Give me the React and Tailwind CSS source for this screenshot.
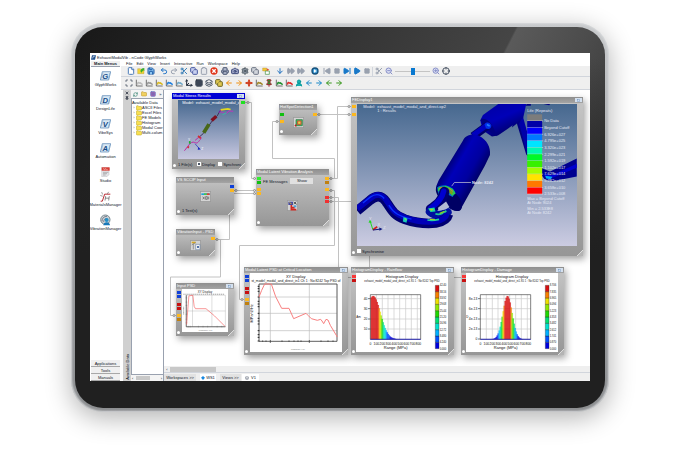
import React from 'react';
import {
  File, Save, Undo2, Redo2, Scissors, Copy, Clipboard, Camera, Settings, ArrowDown, SkipBack,
  Square, FastForward, Play, ZoomIn, ZoomOut, Crosshair, Scan, Grid3x3, Layers, ArrowRight,
  ArrowLeft, Sparkle, Folder, Printer, RefreshCw, Move3d, SkipForward, UserRound, X, Pin,
} from 'lucide-react';

const PALETTE = ['#0000e0', '#0050ff', '#00b0ff', '#00e0d0', '#00e070', '#20d800', '#90e800', '#f0e000', '#f88000', '#d81010'];

const MENUS = ['File', 'Edit', 'View', 'Insert', 'Interactive', 'Run', 'Workspace', 'Help'];

const PRODUCTS = [
  { letter: 'G', name: 'GlyphWorks' },
  { letter: 'D', name: 'DesignLife' },
  { letter: 'V', name: 'VibeSys' },
  { letter: 'A', name: 'Automation' },
  { kind: 'studio', name: 'Studio' },
  { kind: 'materials', name: 'MaterialsManager' },
  { kind: 'vibration', name: 'VibrationManager' },
];

const TREE = ['ASCII Files', 'Excel Files', 'FE Models', 'Histogram', 'Modal Coor', 'Multi-colum'];

function OpenIcon({ className }) {
  return (
    <svg viewBox="0 0 24 24" className={className}>
      <path d="M2 5h8l2 3h9v12H2z" fill="#f0d438" stroke="#a89020" />
      <path d="M10 12c2-7 6-9 12-9v9l-3-2-6 7z" fill="#3cae2c" />
    </svg>
  );
}

function StopIcon({ className }) {
  return (
    <svg viewBox="0 0 24 24" className={className}>
      <circle cx="12" cy="12" r="11" fill="#e03418" />
      <path d="M7 7l10 10M17 7L7 17" stroke="#fff" strokeWidth="4" />
    </svg>
  );
}

function RunIcon({ className }) {
  return (
    <svg viewBox="0 0 24 24" className={className}>
      <circle cx="12" cy="12" r="11" fill="#14507c" />
      <circle cx="12" cy="12" r="7" fill="#48a4dc" />
      <path d="M9 7l8 5-8 5z" fill="#fff" />
    </svg>
  );
}

function SwapIcon({ className }) {
  return (
    <svg viewBox="0 0 24 24" className={className}>
      <path d="M2 3h12v9H2z" fill="#f0c838" stroke="#b08020" />
      <path d="M10 12h12v10H10z" fill="#fff" stroke="#409040" strokeWidth="2" />
      <path d="M14 4l8 4-7 4z" fill="#e05030" />
    </svg>
  );
}

// chart axes with a coloured trace, used by most of the plotting tools
function AxesIcon({ className, color }) {
  return (
    <svg viewBox="0 0 24 24" className={className} fill="none">
      <path d="M4 2v19h19" stroke="#333" strokeWidth="2" />
      <path d="M7 17c3-12 6-3 8-5s3 5 8 3" stroke={color} strokeWidth="5" />
    </svg>
  );
}

const BAR_ONE = [
  { gap: '', items: [[File, 'New', 'text-[#4c7cb8] fill-white'], [OpenIcon, 'Open', ''], [Save, 'Save', 'text-[#1c5ca8] fill-[#8cc4f0]']] },
  { gap: 'ml-[3px]', items: [[Undo2, 'Undo', 'text-[#2878c8]'], [Redo2, 'Redo', 'text-gray-400'], [Scissors, 'Cut', 'text-[#3c80b8]'], [Copy, 'Copy', 'text-[#4858a0] fill-[#c8d0f0]'], [Clipboard, 'Paste', 'text-gray-400 fill-gray-200'], [StopIcon, 'Stop', '']] },
  { gap: 'ml-px', items: [[Printer, 'Print', 'text-[#4c5874] fill-[#b0b8cc]'], [Camera, 'Capture', 'text-[#3c4878] fill-[#a0a8c8]'], [Settings, 'Settings', 'text-[#48545c] fill-gray-400'], [Copy, 'Duplicate', 'text-gray-500 fill-gray-300']] },
  { gap: 'ml-px', items: [[SwapIcon, 'Swap', '']] },
  { gap: 'ml-1', items: [[ArrowDown, 'Step down', 'text-[#2070c0]']] },
  { gap: 'ml-px', items: [[FastForward, 'Step', 'text-gray-400 fill-gray-400'], [FastForward, 'Step all', 'text-gray-400 fill-gray-400']] },
  { gap: 'ml-1', items: [[RunIcon, 'Run', '']] },
  { gap: 'ml-[2px]', items: [[SkipBack, 'First', 'text-gray-400 fill-gray-400'], [Square, 'Halt', 'text-gray-400 fill-gray-400 p-px'], [SkipForward, 'Next', 'text-[#1878c8] fill-[#1878c8]'], [Play, 'Play', 'text-[#1878c8] fill-[#1878c8]'], [Square, 'End', 'text-gray-400 fill-gray-400 p-px']] },
];

const BAR_TWO = [
  [Scan, 'Fit', 'text-gray-600'], [AxesIcon, 'Axes', '', '#bbb'], [AxesIcon, 'Area', '', '#999'], [AxesIcon, 'Log', '', '#d8b820'],
  [AxesIcon, 'Colour', '', '#2080e0'], [AxesIcon, 'Scatter', '', '#70a8c8'], [Move3d, 'Rotate', 'text-gray-800'],
  [Grid3x3, 'Grid', 'text-gray-800 fill-gray-400'], [Layers, 'Overlay', 'text-gray-600'], [Copy, 'Stack', 'text-[#6c6420] fill-[#e0c850]'],
  [ArrowLeft, 'Previous', 'text-[#f09010]'], [ArrowRight, 'Following', 'text-[#f09010]'], [Sparkle, 'Mark', 'text-[#d04020] fill-[#d04020]'],
  [AxesIcon, 'Limits', '', '#a08828'], [Pin, 'Pin', 'text-[#a02830] fill-[#309030]'], [AxesIcon, 'Trend', '', '#209030'],
  [AxesIcon, 'Reject', '', '#e02828'], [UserRound, 'Cursor', 'text-[#089898] fill-[#18b0b0]'], [ArrowLeft, 'Back', 'text-[#1888c8]'],
  [ArrowRight, 'Forward', 'text-[#1888c8]'], [ArrowLeft, 'Left', 'text-[#38981c]'], [ArrowRight, 'Right', 'text-[#38981c]'],
];

function ToolButton({ icon: Icon, label, tone, color }) {
  return (
    <button aria-label={label} className="flex w-[10px] shrink-0 items-center justify-center">
      <Icon className={'size-2 ' + tone} strokeWidth={3} color={color || 'currentColor'} />
    </button>
  );
}

function ProductIcon({ item }) {
  if (item.letter) {
    return (
      <svg viewBox="0 0 33 30" className="h-[10px] w-[11px]">
        <path d="M7 2h25l-6 25H1z" fill="#d8e8f4" stroke="#4c7cac" strokeWidth="2" />
        <path d="M4 22l5-18M25 25l5-19" stroke="#88acd0" strokeWidth="2" />
        <text x="16" y="23" textAnchor="middle" fontSize="23" fontWeight="bold" fontStyle="italic" fill="#184c88">{item.letter}</text>
      </svg>
    );
  }
  if (item.kind === 'studio') {
    return (
      <svg viewBox="0 0 33 30" className="h-[10px] w-[11px]">
        <path d="M5 1h22v22l-6 6H5z" fill="#e4e4e8" stroke="#aaa" />
        <path d="M5 1h24v10H5z" fill="#d83c34" />
        <path d="M9 16h16M9 20h12M9 24h8" stroke="#999" strokeWidth="2" />
        <path d="M9 5h3v3h3V5h3v3h6" stroke="#fff" strokeWidth="1" fill="none" />
      </svg>
    );
  }
  if (item.kind === 'materials') {
    return (
      <svg viewBox="0 0 33 30" className="h-[11px] w-[11px]" fill="none">
        <path d="M2 29h5L14 8h17" stroke="#b82c34" strokeWidth="3" />
        <path d="M5 2l3 7M26 1l-4 6M1 12l7 2" stroke="#666" strokeWidth="2" />
        <path d="M15 27l2-13M26 27l2-13M16 20h11" stroke="#555" strokeWidth="2" />
      </svg>
    );
  }
  return (
    <svg viewBox="0 0 33 36" className="h-3 w-[11px]">
      <circle cx="16" cy="17" r="14" fill="#ccd4d8" stroke="#788890" strokeWidth="3" />
      <path d="M6 22c0-10 6-15 15-15M11 24c0-7 4-11 11-11" stroke="#556" strokeWidth="2" fill="none" />
      <circle cx="20" cy="18" r="6" fill="#2490c8" />
      <path d="M10 34c0-12 20-12 20 0z" fill="#1878b8" />
    </svg>
  );
}

function WindowButton() {
  return (
    <button aria-label="Window" className="flex h-1 w-[7px] shrink-0 items-center justify-center bg-[#d4e0ee] text-[#6c90bc]">
      <Square className="size-[3px]" strokeWidth={4} />
    </button>
  );
}

function Glyph({ title, className, active, display, children }) {
  return (
    <section className={'absolute flex flex-col bg-linear-to-b from-[#c6c6c6] to-[#969696] shadow-[2px_3px_7px_rgba(0,0,0,0.38)] ' + className}>
      <header className={'flex h-[6px] shrink-0 items-center justify-between px-px text-white ' + (active ? 'bg-[#0000d4]' : 'bg-linear-to-b from-[#8e8e8e] to-[#a4a4a4]')}>
        <h2 className="leading-[6px] whitespace-nowrap">{title}</h2>
        {display && <WindowButton />}
      </header>
      {children}
      <i className="absolute bottom-[2px] left-px size-[3px] rounded-full bg-white" />
      <svg viewBox="0 0 6 6" className="absolute right-0 bottom-0 size-[6px]">
        <path d="M6 0L0 6h6z" fill="#b4b4b4" />
        <path d="M6 0L0 6" stroke="#ddd" />
      </svg>
    </section>
  );
}

function Port({ className }) {
  return <i className={'absolute h-[3px] w-1 ' + className} />;
}

function Wires() {
  return (
    <svg className="absolute inset-0 h-full w-full overflow-visible" fill="none" stroke="#c2c2c2">
      <g transform="translate(-164 -90)" strokeWidth="1">
        <path d="M245 102.500h6.500v76h5M329 178.500h8.500v-72h14M317 114.500h34M279 121.500h-6.500v37h62v20" />
        <path d="M234 190.500h22M215 239.500h14.500v-46h27M220.500 239v38h-50v38.500h6" />
        <path d="M329 190.500h5.500v55h-95v54h5M329 197.500h9.500v80h13M329 201.500h40.500v76h92" />
      </g>
      <g transform="translate(-164 -90)" stroke="#999" fill="#eee">
        <circle cx="248" cy="102.500" r="1" />
        <circle cx="254.500" cy="178.500" r="1" />
        <circle cx="319" cy="114.500" r="1" />
        <circle cx="277" cy="121.500" r="1" />
        <circle cx="349" cy="106.500" r="1" />
        <circle cx="349" cy="114.500" r="1" />
        <circle cx="254.500" cy="190.500" r="1" />
        <circle cx="254.500" cy="193.500" r="1" />
        <circle cx="331" cy="178.500" r="1" />
        <circle cx="331" cy="190.500" r="1" />
        <circle cx="331" cy="197.500" r="1" />
        <circle cx="331" cy="201.500" r="1" />
        <circle cx="236" cy="190.500" r="1" />
        <circle cx="217" cy="239.500" r="1" />
        <circle cx="174" cy="315.500" r="1" />
        <circle cx="242" cy="299.500" r="1" />
      </g>
    </svg>
  );
}

function StressView() {
  return (
    <svg viewBox="38 44 183 178" className="mx-[6px] mt-px h-[59px] w-[61px] bg-linear-to-b from-[#46688f] to-[#c8c8e0]" fill="none">
      <text x="50" y="55" fontSize="12" fill="#fff">Model:</text>
      <text x="91" y="55" fontSize="12" fill="#fff">exhaust_model_modal_and</text>
      <path d="M162 81l-7 12-12 11-18 25-11 16-14 12" stroke="#403058" strokeWidth="3" />
      <path d="M115 143l16-26" stroke="#486818" strokeWidth="11" />
      <path d="M139 106l14-13" stroke="#801020" strokeWidth="10" />
      <path d="M161 82l7-9h20" stroke="#7020a0" strokeWidth="4" />
      <path d="M166 74l22-3 8 2" stroke="#e0d820" strokeWidth="5" />
      <path d="M163 82c8-6 12 5 21 2l8-8M184 84l8-7 12 1" stroke="#c030c0" strokeWidth="3" />
      <path d="M172 88l12-5" stroke="#30c0a0" strokeWidth="3" />
      <path d="M57 197l13-17c5-7 12-11 18-8 9 6 12-5 18-10 3-7-3-10-8-4l-9 8" stroke="#c028a0" strokeWidth="3" />
      <path d="M70 184l-3 5M98 152l8 8" stroke="#d03030" strokeWidth="5" />
      <path d="M89 176l13 15" stroke="#1828c0" strokeWidth="2" />
      <path d="M99 186l7 7-9 1z" fill="#1828c0" />
      <path d="M73 168v8" stroke="#18b030" strokeWidth="5" />
      <text x="68" y="167" fontSize="10" fill="#fff">Y</text>
      <text x="108" y="195" fontSize="10" fill="#fff">Z</text>
    </svg>
  );
}

const LEGEND = [
  ['#7c7c7c', 'No Data'], ['#0000a8', 'Beyond Cutoff'], ['#0000ff', '6.926e+027'], ['#0078ff', '4.795e+025'], ['#00e4ff', '3.320e+023'],
  ['#00f8b0', '2.299e+021'], ['#00f828', '1.592e+019'], ['#38f000', '1.102e+017'], ['#a4fc00', '7.629e+014'], ['#ffe400', '5.282e+012'],
  ['#ff7800', '3.658e+010'], ['#ff0000', '2.533e+008'],
];

function LifeView() {
  return (
    <svg viewBox="35 41 660 427" className="mx-[6px] mt-px h-[142px] w-[220px] bg-linear-to-b from-[#46688f] to-[#cccce2]" fill="none">
      <defs>
        <linearGradient id="tube" gradientUnits="userSpaceOnUse" x1="310" y1="210" x2="400" y2="262">
          <stop offset="0" stopColor="#000070" />
          <stop offset="0.3" stopColor="#0000b8" />
          <stop offset="0.7" stopColor="#0000a0" />
          <stop offset="1" stopColor="#000068" />
        </linearGradient>
        <linearGradient id="tubeTop" x1="0" y1="0" x2="0.6" y2="1">
          <stop offset="0" stopColor="#0000a0" />
          <stop offset="0.5" stopColor="#0000b8" />
          <stop offset="1" stopColor="#000060" />
        </linearGradient>
      </defs>
      {/* tail pipe on the right */}
      <path d="M525 41l24 158-6-6-28-93-15 12 20-71z" fill="#000080" />
      <path d="M532 75l14 50v65l-24-89z" fill="#0000a8" />
      <path d="M590 234l25 10 80-39v54l-72 14-24-5-9-12z" fill="#000090" />
      <path d="M596 249l24 6 75-34v12l-72 30-25-4z" fill="#0000d0" />
      <path d="M600 257l22 3-5 7-14-2z" fill="#00a8f8" />
      {/* rear silencer */}
      <path d="M405 90l8-16 46-33h84l-9 42-76 53-18 3-28-19z" fill="url(#tubeTop)" />
      <path d="M407 86c18-4 35 12 48 52l-26-16c-16-12-23-25-22-36z" fill="#000080" />
      <path d="M383 138l44-32" stroke="#000068" strokeWidth="25" />
      <path d="M383 135l44-32" stroke="#0000c0" strokeWidth="15" />
      <path d="M418 102c4-7 17-8 20 4 1 10-9 13-16 8z" fill="#0030e8" />
      <path d="M425 103l8 4" stroke="#2080ff" strokeWidth="5" />
      <path d="M545 41h12v5h-16zM595 41h20l-3 4z" fill="#000080" />
      {/* main silencer */}
      <path d="M353 151c6-16 28-24 49-14 22 11 35 34 32 57l-15 32-74 133c-10 8-28 2-43-15-21-20-34-44-29-57l7-17z" fill="url(#tube)" />
      <path d="M273 291c12-15 47 4 65 27 15 19 15 38 6 43-13 6-33-5-51-24-16-16-26-35-20-46z" fill="#000064" />
      <path d="M275 292c15-12 43-7 55 14l-8 15-18-9-24 3z" fill="#006cc8" />
      <path d="M278 293l24-6 20 9 9 14-11 8-9-16-19-6-15 8z" fill="#28c850" />
      <path d="M284 291l20 1 19 15-5 7-14-14z" fill="#80a018" />
      <path d="M310 294l13 10M281 295l9-4" stroke="#e08020" strokeWidth="3" />
      {/* elbow out of the silencer */}
      <path d="M297 305c-5 28-23 40-41 52" stroke="#000070" strokeWidth="30" strokeLinecap="round" />
      <path d="M295 303c-5 25-23 40-40 52" stroke="#0000d0" strokeWidth="16" strokeLinecap="round" />
      <path d="M253 365c18 14 39 9 54 1" stroke="#0010a0" strokeWidth="24" strokeLinecap="round" />
      <path d="M278 353l24-19 10 17-12 7-21 4z" fill="#b4bad4" />
      <path d="M248 355l19-3 3 12-15 2z" fill="#18d8a0" />
      <path d="M252 356l13 1-7 6z" fill="#b0d820" />
      <path d="M270 371c12 5 23-1 33-9" stroke="#20c898" strokeWidth="5" />
      <path d="M283 370l14-6" stroke="#90d020" strokeWidth="4" />
      {/* front pipe */}
      <path d="M35 362l38-31c18-16 35-16 49 4 18 28 24 41 57 53 36 12 67 14 92 11 23-4 35-14 38-26" stroke="#000070" strokeWidth="29" />
      <path d="M35 356l38-30c18-16 35-16 49 4 18 28 24 41 57 53 36 12 67 14 92 11 21-4 31-13 34-24" stroke="#0000b8" strokeWidth="17" />
      <path d="M52 339l22-18c14-10 30-10 42 4M130 345c14 25 33 34 68 42" stroke="#0830ff" strokeWidth="4" />
      <path d="M174 381l12 4-3 13-11-4z" fill="#18c8b8" />
      <path d="M178 384l5 7" stroke="#60e860" strokeWidth="4" />
      <path d="M246 390c12 3 24 1 35-2" stroke="#20d0a0" strokeWidth="5" />
      <path d="M253 388l16 1" stroke="#b0e020" strokeWidth="3" />
      {/* axis triad */}
      <path d="M82 419l-8-25" stroke="#20d820" strokeWidth="3" />
      <path d="M69 398l4-9 6 8z" fill="#20d820" />
      <path d="M82 419l13-9" stroke="#d02020" strokeWidth="5" />
      <path d="M82 420l24-3" stroke="#101880" strokeWidth="3" />
      <path d="M101 412l10 5-9 5z" fill="#101880" />
      <g fill="#e4e8f4" fontSize="12">
        <text x="70" y="389">Y</text>
        <text x="96" y="409">X</text>
        <text x="113" y="417">Z</text>
        <text x="53" y="54">Model:</text>
        <text x="95" y="54">exhaust_model_modal_and_direct.op2</text>
        <text x="95" y="66">1 : Results</text>
        <path d="M319 288l8-11h50" stroke="#ddd" strokeWidth="2" fill="none" />
        <text x="380" y="281" fontWeight="bold">Node: 8242</text>
        <text x="546" y="66">Life (Repeats)</text>
        {LEGEND.map(([color, label], i) => (
          <g key={label}>
            <path d={`M546 ${72 + i * 20}h45v20h-45z`} fill={color} />
            <path d={`M546 ${92 + i * 20}h48`} stroke="#ddd" strokeWidth="2" />
            <text x="597" y={96 + i * 20}>{label}</text>
          </g>
        ))}
        <text x="546" y="331">Max = Beyond Cutoff</text>
        <text x="546" y="343">At Node 9024</text>
        <text x="546" y="361">Min = 2.533E8</text>
        <text x="546" y="373">At Node 8242</text>
      </g>
    </svg>
  );
}

function InputPsdChart() {
  return (
    <svg viewBox="48 101 140 129" className="ml-[6px] h-[43px] w-[46px] bg-white" fill="none">
      <text x="118" y="111" textAnchor="middle" fontSize="9" fill="#222">XY Display</text>
      <path d="M52 116h126" stroke="#777" strokeWidth="2" strokeDasharray="4 2" />
      <path d="M61 119h119v96H61zM61 167h119M80 119v96M139 119v96" stroke="#999" />
      <path d="M61 119v96h119" stroke="#333" strokeWidth="2" />
      <path d="M59 127h5M59 140h5M59 150h5M59 177h5M59 192h5M59 203h5M67 212v5M73 212v5M98 212v5M112 212v5M126 212v5M155 212v5M169 212v5" stroke="#555" />
      <path d="M62 208l7-87 12-2 4 34 4 7h32l26 22 32 32" stroke="#f46060" strokeWidth="2" />
      <path d="M53 154v25" stroke="#777" strokeWidth="2" strokeDasharray="3 1" />
      <text x="120" y="227" textAnchor="middle" fontSize="6" fill="#666">Frequency (Hz)</text>
    </svg>
  );
}

function CriticalChart() {
  return (
    <svg viewBox="254 54 276 237" className="ml-[6px] h-[79px] w-[92px] bg-white" fill="none">
      <text x="391" y="69" textAnchor="middle" fontSize="12" fill="#111">XY Display</text>
      <text x="392" y="82" textAnchor="middle" fontSize="10" fill="#111">st_model_modal_and_direct_in1  Ch 1 : No:8242  Top PSD of</text>
      <path d="M281 87h234v172H281zM281 126h234M281 175h234M281 227h234M315 87v172M432 87v172" stroke="#bbb" strokeWidth="2" />
      <path d="M281 87v172h234V87z" stroke="#333" strokeWidth="2" />
      <path d="M277 94h5M277 101h5M277 109h5M277 126h5M277 139h5M277 147h5M277 155h5M277 175h5M277 190h5M277 198h5M277 207h5M277 227h5M277 239h5M277 247h5M277 258h5" stroke="#222" strokeWidth="3" />
      <path d="M292 256v5M302 256v5M315 255v9M350 256v5M371 256v5M386 256v5M398 256v5M407 256v5M432 255v9M467 256v5M488 256v5M503 256v5" stroke="#333" strokeWidth="2" />
      <path d="M281 126l8-20 9-19h20l13 38 18 35h22l14 31 37-16 7 7 9 9 18 5 10-3 4 5 5 8 7-13 6 2 7 16 21 35" stroke="#f88080" strokeWidth="3" />
      <text x="264" y="175" fontSize="12" fill="#111" textAnchor="middle" transform="rotate(-90 264 175)">MPa^2/Hz</text>
      <text x="398" y="285" textAnchor="middle" fontSize="6" fill="#666">Frequency (Hz)</text>
    </svg>
  );
}

function Histogram({ center, spread, yTicks, yLabel, scale }) {
  const bars = [];
  for (let x = 92; x < 240; x += 3) {
    const ratio = Math.exp(-((x - center) ** 2) / (2 * spread ** 2));
    bars.push({ x, height: ratio * 130, color: PALETTE[Math.min(9, Math.floor(ratio * 11.5))] });
  }
  return (
    <svg viewBox="48 40 276 237" className="ml-[5px] h-[79px] w-[92px] bg-white" fill="none">
      <text x="186" y="54" textAnchor="middle" fontSize="12" fill="#111">Histogram Display</text>
      <text x="186" y="67" textAnchor="middle" fontSize="8" fill="#222">exhaust_model_modal_and_direct_in1.S5  1 : No:8242  Top PSD</text>
      <path d="M109 105v134M127 105v134M144 105v134M162 105v134M179 105v134M197 105v134M214 105v134M232 105v134M91 208h151M91 178h151M91 147h151M91 117h151" stroke="#c8c8c8" strokeWidth="2" />
      {bars.map((b) => (
        <path key={b.x} d={`M${b.x} 239h3v${-b.height}h-3z`} fill={b.color} stroke={b.color} strokeWidth="0.5" />
      ))}
      <path d="M91 105h151v134H91z" stroke="#444" strokeWidth="2" />
      <path d="M91 239h151" stroke="#2020d0" strokeWidth="2" />
      <g fontSize="12" fill="#111" textAnchor="middle">
        {[0, 100, 200, 300, 400, 500, 600, 700, 800].map((v, i) => (
          <text key={v} x={91 + i * 18} y="257" fontSize="10">{v}</text>
        ))}
        <text x="167" y="269">Range (MPa)</text>
      </g>
      <text x="49" y="176" fontSize="9" fill="#111">{yLabel}</text>
      {yTicks.map(([label, y]) => (
        <g key={label}>
          <path d={`M84 ${y}h7`} stroke="#333" strokeWidth="2" />
          <text x="82" y={y + 4} textAnchor="end" fontSize="10" fill="#111">{label}</text>
        </g>
      ))}
      {PALETTE.map((color, i) => (
        <path key={color} d={`M286 ${248 - i * 19}h11v19h-11z`} fill={color} stroke="#222" />
      ))}
      {scale.map((label, i) => (
        <text key={label} x="299" y={80 + i * 19} fontSize="8" fill="#111">{label}</text>
      ))}
    </svg>
  );
}

function GlyphIcon({ kind }) {
  return (
    <svg viewBox="0 0 33 33" className="size-[11px]">
      <path d="M1 1h31v31H1z" fill="#d4d4d4" stroke="#888" strokeWidth="2" />
      {kind === 'hotspot' && (
        <g>
          <path d="M9 8h19v18H9z" fill="#48b860" stroke="#1c7838" strokeWidth="2" />
          <path d="M14 12h10v10H14z" fill="#e0d848" stroke="#d04838" strokeWidth="3" />
          <path d="M4 26l6-6v10z" fill="#c02020" />
        </g>
      )}
      {kind === 'input' && (
        <g>
          <path d="M4 7h25v5H4z" fill="#20a0d8" />
          <path d="M20 7h9v5h-9z" fill="#e04030" />
          <path d="M12 7h8v5h-8z" fill="#48c848" />
          <path d="M8 17l6 8m0-8l-6 8M17 17h5v8h-5zM26 17v8" stroke="#555" strokeWidth="2" fill="none" />
        </g>
      )}
      {kind === 'vibration' && (
        <g>
          <path d="M5 5h12v5H5z" fill="#d8a820" />
          <path d="M10 10v18M5 15l12-7" stroke="#777" strokeWidth="2" />
          <path d="M17 13h13v16H17z" fill="#f4f4f4" stroke="#7088a8" strokeWidth="2" />
          <circle cx="24" cy="21" r="3" fill="#204890" />
        </g>
      )}
      {kind === 'analysis' && (
        <g>
          <path d="M4 5h14v10H4z" fill="#484ca0" />
          <path d="M8 7l5 5" stroke="#e0c020" strokeWidth="3" />
          <path d="M20 12l8-7M20 6l9 7" stroke="#505050" strokeWidth="3" />
          <path d="M13 15v14h15M13 23h10" stroke="#d02820" strokeWidth="5" fill="none" />
          <path d="M20 16h8v6h-8z" fill="#48a0d8" />
        </g>
      )}
    </svg>
  );
}

function Check({ id, label, checked }) {
  return (
    <span className="flex items-center gap-px">
      <input id={id} type="checkbox" defaultChecked={checked} className="size-1 appearance-none border border-white bg-white checked:bg-gray-600" />
      <label htmlFor={id}>{label}</label>
    </span>
  );
}

function Workspace() {
  return (
    <div className="relative min-h-[276px] flex-1 overflow-hidden bg-white">
      <Wires />

      <Glyph title="Modal Stress Results" active display className="top-[3px] left-2 h-[76px] w-[73px]">
        <StressView />
        <div className="flex flex-1 items-center gap-[3px] pl-[6px] whitespace-nowrap">
          <span className="w-4">1 File(s)</span>
          <Check id="show" label="Display" checked />
          <Check id="sync" label="Synchroni" />
        </div>
        <Port className="top-2 right-0 bg-[#20e020]" />
      </Glyph>

      <Glyph title="HotSpotDetection1" className="top-[14px] left-[115px] h-[31px] w-[38px]">
        <div className="flex flex-1 items-center justify-center"><GlyphIcon kind="hotspot" /></div>
        <Port className="top-[9px] left-px bg-[#10c010]" />
        <Port className="top-4 left-px bg-[#fcb820]" />
        <Port className="top-[9px] right-0 bg-[#fcb820]" />
      </Glyph>

      <Glyph title="Modal Latent Vibration Analysis" className="top-[79px] left-[92px] h-[57px] w-[73px]">
        <div className="flex items-center gap-[3px] pt-[3px] pl-[7px]">
          <span>FE Messages</span>
          <button className="h-[6px] w-[23px] bg-[#e0e0e0] leading-[6px]">Show</button>
        </div>
        <div className="flex flex-1 items-center justify-center"><GlyphIcon kind="analysis" /></div>
        <Port className="top-2 left-px bg-[#30f030]" />
        <Port className="top-3 left-px bg-[#10c010]" />
        <Port className="top-[19px] left-px bg-[#fcb820]" />
        <Port className="top-[23px] left-px bg-[#fcb820]" />
        <Port className="top-2 right-0 bg-[#fcb820]" />
        <Port className="top-3 right-0 bg-[#c08010]" />
        <Port className="top-[19px] right-0 bg-[#fcb820]" />
        <Port className="top-[27px] right-0 bg-[#f03030]" />
        <Port className="top-[31px] right-0 bg-[#f03030]" />
      </Glyph>

      <Glyph title="VS SCCIP Input" className="top-[87px] left-3 h-[38px] w-[58px]">
        <div className="flex flex-1 items-center justify-center pt-[2px]"><GlyphIcon kind="input" /></div>
        <span className="pb-[2px] pl-[6px]">1 Test(s)</span>
        <Port className="top-2 right-0 bg-[#1040d8]" />
        <Port className="top-3 right-0 bg-[#fcb820]" />
      </Glyph>

      <Glyph title="VibrationInput - PSD" className="top-[139px] left-3 h-[27px] w-[39px]">
        <div className="flex flex-1 items-center justify-center"><GlyphIcon kind="vibration" /></div>
        <Port className="top-2 right-0 bg-[#fcb820]" />
      </Glyph>

      <Glyph title="Input PSD" display className="top-[193px] left-3 h-[53px] w-[58px]">
        <InputPsdChart />
        <Port className="top-2 left-px bg-[#1040d8]" />
        <Port className="top-3 left-px bg-[#1040d8]" />
        <Port className="top-5 left-px bg-[#c81010]" />
        <Port className="top-6 left-px bg-[#c81010]" />
        <Port className="top-[31px] left-px bg-[#fcb820]" />
        <Port className="top-[35px] left-px bg-[#c08010]" />
      </Glyph>

      <Glyph title="Modal Latent PSD at Critical Location" display className="top-[177px] left-20 h-[88px] w-[104px]">
        <CriticalChart />
        <Port className="top-2 left-px bg-[#1040d8]" />
        <Port className="top-3 left-px bg-[#1040d8]" />
        <Port className="top-5 left-px bg-[#c81010]" />
        <Port className="top-6 left-px bg-[#c81010]" />
        <Port className="top-[31px] left-px bg-[#fcb820]" />
        <Port className="top-[35px] left-px bg-[#c08010]" />
      </Glyph>

      <Glyph title="FEDisplay1" display className="top-[7px] left-[187px] h-[159px] w-[232px]">
        <LifeView />
        <div className="flex flex-1 items-center pl-[6px]"><Check id="sync-life" label="Synchronise" /></div>
        <Port className="top-2 left-px bg-[#fcb820]" />
        <Port className="top-4 left-px bg-[#fcb820]" />
      </Glyph>

      <Glyph title="HistogramDisplay - Rainflow" display className="top-[177px] left-[187px] h-[88px] w-[103px]">
        <Histogram
          center={98} spread={22} yLabel="Am"
          yTicks={[['40', 117], ['30', 147], ['20', 178], ['10', 208]]}
          scale={['42.40', '38.16', '33.92', '29.68', '25.44', '21.20', '16.96', '12.72', '8.480', '4.240', '0.000']}
        />
        <Port className="top-2 left-px bg-[#f83838]" />
        <Port className="top-3 left-px bg-[#c81010]" />
      </Glyph>

      <Glyph title="HistogramDisplay - Damage" display className="top-[177px] left-[297px] h-[88px] w-[103px]">
        <Histogram
          center={171} spread={14} yLabel="D"
          yTicks={[['8e-13', 117], ['6e-13', 147], ['4e-13', 178], ['2e-13', 208], ['0', 238]]}
          scale={['8.706', '7.835', '6.965', '6.094', '5.223', '4.353', '3.482', '2.612', '1.741', '0.870', '0.000']}
        />
        <Port className="top-2 left-px bg-[#f83838]" />
        <Port className="top-3 left-px bg-[#c81010]" />
      </Glyph>
    </div>
  );
}

function DataTree() {
  return (
    <div className="flex w-[33px] shrink-0 flex-col border-r border-gray-400 bg-[#f4f4f4]">
      <div className="flex h-2 items-center justify-around">
        <button aria-label="Refresh"><RefreshCw className="size-[5px] text-[#408878]" strokeWidth={3} /></button>
        <button aria-label="Folder"><Folder className="size-[6px] fill-[#f0d060] text-[#b89020]" /></button>
        <button aria-label="View"><Grid3x3 className="size-[6px] fill-[#e070a0] text-[#4060c0]" /></button>
        <button aria-label="More">»</button>
      </div>
      <div className="flex-1 border border-r-0 border-gray-400 bg-white pt-px whitespace-nowrap">
        <p className="leading-[5px]">Available Data</p>
        <ul>
          {TREE.map((name) => (
            <li key={name} className="flex h-[5px] items-center">
              <span className="w-1 text-center text-gray-500">›</span>
              <Folder className="size-[6px] shrink-0 fill-[#f8e050] text-[#b8a020]" />
              {name}
            </li>
          ))}
        </ul>
      </div>
      <div className="flex h-[6px] items-center px-px">
        <span className="w-1">‹</span>
        <span className="h-1 w-[14px] bg-[#c8c8c8]" />
        <span className="ml-auto">›</span>
      </div>
    </div>
  );
}

export default function App() {
  return (
    <div className="min-h-screen bg-white px-[71px] pt-[23px] pb-[39px] font-['Liberation_Sans',Arial,sans-serif] text-[4px] leading-[5px] text-gray-900">
      <div className="rounded-[32px] bg-linear-to-b from-[#c8cacc] via-[#a4a6a8] to-[#8c8e90] p-1 shadow-[0_6px_26px_rgba(0,0,0,0.3),inset_0_0_2px_1px_#d8dadc]">
        <div className="rounded-[28px] bg-[linear-gradient(180deg,transparent_8%,#202020_60%),linear-gradient(117deg,#181818,#454545_393px,#5a5a5a_395px,#4c4c4c_460px,#303030_560px)] pt-[26px] pr-[15px] pb-[27px] pl-[15px]">
          <div className="overflow-hidden bg-white">
            <div className="flex h-2 items-center gap-px px-px">
              <svg viewBox="0 0 15 15" className="size-[5px]">
                <path d="M3 1h12l-3 13H0z" fill="#20508c" />
                <path d="M5 10l2-6h4" stroke="#fff" strokeWidth="2" fill="none" />
              </svg>
              <h1>ExhaustModalVib - nCode GlyphWorks</h1>
            </div>

            <div className="flex">
              <aside className="flex w-[31px] shrink-0 flex-col">
                <h2 className="mx-px mb-[3px] h-[6px] border-b border-gray-400 bg-[#f0f0f0] text-center font-bold">Main Menus</h2>
                <nav className="flex flex-col">
                  {PRODUCTS.map((item) => (
                    <a key={item.name} href="#" className="flex h-6 flex-col items-center whitespace-nowrap">
                      <span className="flex h-3 items-center"><ProductIcon item={item} /></span>
                      <span>{item.name}</span>
                    </a>
                  ))}
                </nav>
                <div className="mt-auto mb-px flex flex-col gap-px px-px">
                  {['Applications', 'Tools', 'Manuals'].map((name) => (
                    <button key={name} className="h-[6px] bg-[#f0f0f0] shadow-[0_1px_0_#a8a8a8]">{name}</button>
                  ))}
                </div>
              </aside>

              <main className="flex min-w-0 flex-1 flex-col">
                <nav className="flex h-[5px] items-center gap-1 pl-[5px]">
                  {MENUS.map((name) => (
                    <button key={name}>{name}</button>
                  ))}
                </nav>

                <div className="flex h-[11px] items-center border-b border-gray-300 bg-[#efefef] pl-[5px]">
                  {BAR_ONE.map((group, i) => (
                    <div key={i} className={'flex ' + group.gap}>
                      {group.items.map(([icon, label, tone]) => (
                        <ToolButton key={label} icon={icon} label={label} tone={tone} />
                      ))}
                    </div>
                  ))}
                  <i className="mr-px h-[9px] w-px bg-gray-300" />
                  <ToolButton icon={Scissors} label="Trim" tone="text-gray-400" />
                  <ToolButton icon={ZoomOut} label="Zoom out" tone="text-[#8890c8] fill-[#dce0f4]" />
                  <input
                    type="range"
                    aria-label="Zoom"
                    defaultValue="50"
                    className="mx-px h-2 w-[35px] appearance-none bg-[linear-gradient(#c4c4c4,#c4c4c4)] bg-size-[100%_1px] bg-center bg-no-repeat [&::-webkit-slider-thumb]:h-[7px] [&::-webkit-slider-thumb]:w-1 [&::-webkit-slider-thumb]:appearance-none [&::-webkit-slider-thumb]:bg-[#0878d0]"
                  />
                  <ToolButton icon={ZoomIn} label="Zoom in" tone="text-[#8890c8] fill-[#dce0f4]" />
                  <ToolButton icon={Crosshair} label="Centre" tone="text-gray-600" />
                </div>

                <div className="flex h-[13px] items-center border-b border-gray-300 bg-[#efefef] pl-[3px]">
                  {BAR_TWO.map(([icon, label, tone, color]) => (
                    <ToolButton key={label} icon={icon} label={label} tone={tone} color={color} />
                  ))}
                </div>

                <div className="flex flex-1">
                  <div className="ml-[2px] flex w-2 shrink-0 flex-col items-center gap-px bg-[#d0d0d0] py-px">
                    <X className="size-1" strokeWidth={4} />
                    <Pin className="size-1" strokeWidth={4} />
                    <span className="mt-auto rotate-180 [writing-mode:vertical-rl]">Available Data</span>
                  </div>
                  <DataTree />
                  <div className="flex min-w-0 flex-1 flex-col">
                    <Workspace />
                    <div className="flex h-[6px] items-center bg-[#efefef]">
                      <span className="w-[6px] text-center">‹</span>
                      <span className="h-[5px] w-[46px] bg-[#c8c8c8]" />
                    </div>
                    <div className="flex h-[9px] items-end border-t border-gray-300 bg-[#efefef]">
                      <button className="h-[7px] w-8 bg-[#e2e2e2]">Workspaces &gt;&gt;</button>
                      <button className="ml-1 flex h-[7px] w-4 items-center justify-center gap-px bg-white">
                        <svg viewBox="0 0 12 12" className="size-1"><path d="M6 0l6 5-6 7-6-7z" fill="#1888e0" /></svg>
                        WS1
                      </button>
                      <button className="ml-1 h-[7px] w-[21px] bg-[#e2e2e2]">Views &gt;&gt;</button>
                      <button className="ml-px flex h-[7px] w-[17px] items-center justify-center gap-[2px] bg-white">
                        <Layers className="size-1 text-gray-500" strokeWidth={3} />
                        V1
                      </button>
                    </div>
                  </div>
                </div>
              </main>
            </div>
          </div>
        </div>
      </div>
    </div>
  );
}
